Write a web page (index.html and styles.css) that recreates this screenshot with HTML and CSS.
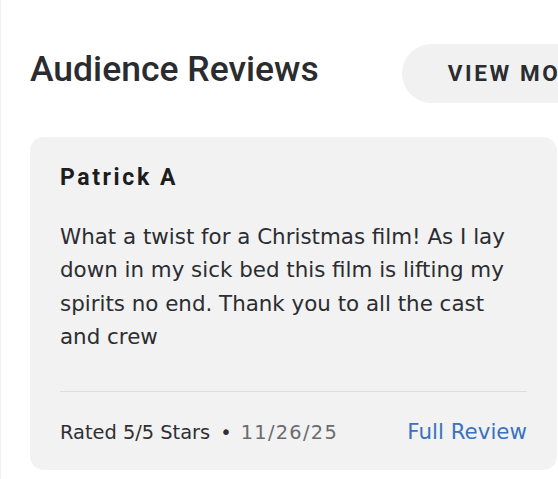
FILE: index.html
```html
<!DOCTYPE html>
<html lang="en">
<head>
<meta charset="utf-8">
<title>Audience Reviews</title>
<link rel="stylesheet" href="styles.css">
</head>
<body>
<div class="page">
  <header class="section-head">
    <h2 class="section-title">Audience Reviews</h2>
    <a class="view-more" href="#">VIEW MORE</a>
  </header>
  <article class="review-card">
    <h3 class="reviewer">Patrick A</h3>
    <p class="review-text">What a twist for a Christmas film! As I lay down in my sick bed this film is lifting my spirits no end. Thank you to all the cast and crew</p>
    <footer class="review-footer">
      <span class="review-meta">Rated 5/5 Stars<span class="dot">•</span><span class="date">11/26/25</span></span>
      <a class="full-review" href="#">Full Review</a>
    </footer>
  </article>
</div>
</body>
</html>
```

FILE: styles.css
```css
html, body {
  margin: 0;
  padding: 0;
  overflow: hidden;
  background: #ffffff;
}

body {
  font-family: Roboto, "Liberation Sans", sans-serif;
  color: #2a2c30;
}

.page {
  min-height: 479px;
  border-left: 1px solid #f1f1f1;
  padding: 44px 0 0 29px;
  box-sizing: border-box;
}

.section-head {
  display: flex;
  align-items: center;
  height: 59px;
}

.section-title {
  margin: 0 83px 8px 0;
  font-size: 35.5px;
  line-height: 1;
  font-weight: 500;
  color: #2a2c30;
  white-space: nowrap;
  flex-shrink: 0;
}

.view-more {
  flex-shrink: 0;
  display: inline-flex;
  align-items: center;
  height: 59px;
  padding: 0 46px;
  border-radius: 30px;
  background: #f1f1f2;
  color: #2a2c30;
  text-decoration: none;
  font-size: 22.5px;
  line-height: 1;
  font-weight: 700;
  letter-spacing: 2.6px;
  white-space: nowrap;
}

.review-card {
  margin-top: 34px;
  width: 527px;
  box-sizing: border-box;
  padding: 27px 30px 22px 30px;
  background: #f2f2f2;
  border-radius: 14px;
}

.reviewer {
  margin: 0;
  font-size: 23px;
  line-height: 28px;
  font-weight: 700;
  letter-spacing: 2.6px;
  color: #1c1d20;
}

.review-text {
  margin: 28px 0 0;
  font-family: "DejaVu Sans", Roboto, sans-serif;
  font-size: 21.4px;
  line-height: 33.4px;
  color: #2b2d31;
}

.review-footer {
  margin-top: 37px;
  border-top: 1px solid #dedede;
  padding-top: 25px;
  display: flex;
  justify-content: space-between;
  align-items: baseline;
  line-height: 30px;
  font-family: "DejaVu Sans", Roboto, sans-serif;
}

.review-meta {
  font-size: 19.4px;
  color: #2e2f33;
}

.dot {
  margin: 0 9px 0 10px;
}

.date {
  color: #6a6b6f;
  letter-spacing: 1.3px;
}

.full-review {
  font-size: 21.4px;
  color: #3a72c0;
  text-decoration: none;
}
```
